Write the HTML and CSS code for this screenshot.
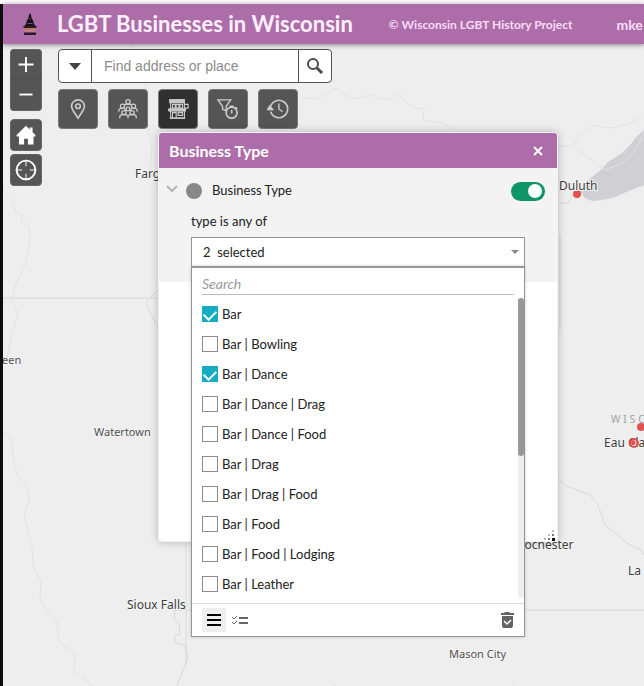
FILE: index.html
```html
<!DOCTYPE html>
<html lang="en">
<head>
<meta charset="utf-8">
<meta name="viewport" content="width=device-width, initial-scale=1">
<title>LGBT Businesses in Wisconsin</title>
<link rel="stylesheet" href="styles.css">
</head>
<body>
<div class="app">
  <header class="header">
    <svg class="logo" viewBox="0 0 14 24" aria-hidden="true">
      <path d="M7 1l1 2 .6 3 1.400 2.500 1 3.500 1.500 2H1.500L3 12l1-3.500L5.400 6 6 3z" fill="#171017"/>
      <path d="M6.200 7h1.600M4.500 11.500h5" stroke="#765077"/>
      <path d="M0 14h14l-1 2H1z" fill="#2c1b22"/>
      <path d="M1 16h12v1.500H1z" fill="#b8795e"/>
      <path d="M1 18h12l-2 1.500H3z" fill="#d18a72"/>
      <path d="M1 20.500h12v2.500H1z" fill="#2c1b2c"/>
    </svg>
    <h1 class="title">LGBT Businesses in Wisconsin</h1>
    <a class="credit" href="#">© Wisconsin LGBT History Project</a>
    <a class="account" href="#">mke</a>
  </header>

  <main class="map">
    <svg class="basemap" aria-hidden="true">
      <path class="water" d="M641 86l-8 7-5 7-9 9-14 9-7 8-13 10-11 12 5 2 3 4 7 3 11-1 12-3 14-6 15-6z"/>
      <g class="border">
        <path d="M0 254H190M183 490v130M183 566h8M522 566H641M557 192v94M557 159h8l5-9"/>
        <path d="M183 566l-11 0-1 8 5 6 1 11-5 0 0 6 4 3 6 1 3 12-5 14-4 9-3 10"/>
        <path d="M155 246l-12 12 4 10 10 19M555 435l8 7 14 5 10 4 8 10 7 20 12 10 10 8 14 7 6 10"/>
      </g>
      <g class="river">
        <path d="M129 0l2 15 12 25 2 45 4 20-2 20 6 13 4 12M0 147l9 10 4 11 6 4-1 6 8 4 1 12-4 24-10 22-4 16 6 14-6 20-6 30M0 388l8 6 3 24 3 12 10 12 2 14-5 16 4 14 4 18 1 18 8 16-1 16 6 12 11 12 2 20 16 12-1 16 18 16 9 14 2 14"/>
        <path d="M300 53l12 2 12-5 8-6 8 5 8 6 12-2 9-3 6 4 12 2 8-8 8 10 10 7 8-1-1 13 8 0 12 2 12 6M555 103l15-2 8-11 12-8 20 2 18-5 10-7M570 102l22 17 10 7 18-7 12-12 12-24"/>
        <path d="M510 640l10 17 13 13 7 14v10M332 640v10l8 8"/>
      </g>
      <g class="point"><circle cx="574" cy="150" r="4"/><circle cx="638" cy="383" r="4"/><circle cx="631" cy="399" r="5"/></g>
      <g class="place">
        <text x="132" y="134">Fargo</text>
        <text x="556" y="146">Duluth</text>
        <text x="601" y="403">Eau Cla</text>
        <text x="514" y="505">Rochester</text>
        <text x="625" y="531">La</text>
        <text x="124" y="565">Sioux Falls</text>
      </g>
      <g class="place town">
        <text x="-1" y="320">een</text>
        <text x="91" y="392">Watertown</text>
        <text x="446" y="614">Mason City</text>
      </g>
      <text class="state" x="608" y="379">WISC</text>
      <circle class="ring" cx="631" cy="399" r="4"/>
    </svg>

    <div class="overlay">
      <nav class="controls" aria-label="Map navigation">
        <div class="zoom">
          <button class="control" aria-label="Zoom in"><svg viewBox="0 0 32 31"><path d="M8 15h16M16 7v16"/></svg></button>
          <button class="control" aria-label="Zoom out"><svg viewBox="0 0 32 31"><path d="M9 15h14"/></svg></button>
        </div>
        <button class="control home" aria-label="Home"><svg viewBox="0 0 32 32"><path class="solid" d="M16 6L6 16v1.500h2.500V26H14v-6h4v6h6v-8.500h2V16l-3-3V8h-3v2z"/></svg></button>
        <button class="control" aria-label="My location"><svg viewBox="0 0 32 32"><circle cx="16" cy="16" r="10"/><path class="thin" d="M16 5v7M16 20v7M5 16h7M20 16h7"/></svg></button>
      </nav>

      <div class="workspace">
        <form class="search" role="search">
          <button type="button" class="search-menu" aria-label="Search sources"><svg viewBox="0 0 12 7"><path d="M0 0h12L6 7z"/></svg></button>
          <input class="search-input" type="text" placeholder="Find address or place" aria-label="Find address or place">
          <button type="button" class="search-go" aria-label="Search"><svg viewBox="0 0 18 18"><circle cx="7" cy="7" r="5"/><path d="M10.500 10.500L16 16" stroke-width="3"/></svg></button>
        </form>

        <div class="widgets">
          <button class="widget" aria-label="Locations"><svg viewBox="0 0 24 24"><path d="M12 22C9 17 5 13 5 9a7 7 0 0 1 14 0c0 4-4 8-7 13z" stroke-width="1.800"/><circle cx="12" cy="9" r="2.500" stroke-width="1.800"/></svg></button>
          <button class="widget" aria-label="Community"><svg viewBox="0 0 24 24"><g stroke-width="1.400"><circle cx="12" cy="4" r="2.300"/><circle cx="6" cy="9" r="2.300"/><circle cx="18" cy="9" r="2.300"/><circle cx="7.500" cy="16" r="2.300"/><circle cx="16.500" cy="16" r="2.300"/><circle cx="12" cy="12" r="2"/><path d="M8.500 8V7h7v1M2 15v-2l2-2h4l2 3M22 15v-2l-2-2h-4l-2 3M3 22v-2l2-2h5l2 2 2-2h5l2 2v2M12 20v2"/></g></svg></button>
          <button class="widget active" aria-label="Business type"><svg viewBox="0 0 24 24"><path d="M3 2h16v3H3zM4 5v7M19 5v7M2 12h18v2H2zM4 14v8h15v-8M19 7h4v4h-4" stroke-width="1.200"/><path class="fill" d="M3 2h16v2H3zM2 12h18v2H2z"/><path d="M6 7h3v4H6zM10 7h3v4h-3zM14 7h3v4h-3zM6 16h4v6H6zM12 16h5v3h-5zM3 22h17" stroke-width="1.200"/></svg></button>
          <button class="widget" aria-label="Time filter"><svg viewBox="0 0 24 24"><path d="M1 2h14L10 9v5l-4-2V9z" stroke-width="1.500"/><circle cx="16" cy="16" r="6" stroke-width="1.800"/><path d="M16 17v-4M14 9h4M20 10l2 2" stroke-width="1.800"/></svg></button>
          <button class="widget" aria-label="Timeline"><svg viewBox="0 0 24 24"><path d="M4 15a9.500 9.500 0 1 0 0-6" stroke-width="1.800"/><path d="M13 6v6l4 3" stroke-width="1.500"/><path class="fill" d="M0 13l3-5 4 5z"/></svg></button>
        </div>
      </div>
    </div>

    <section class="panel" aria-labelledby="panel-title">
      <div class="panel-head">
        <h2 class="panel-title" id="panel-title">Business Type</h2>
        <button class="close" aria-label="Close"><svg viewBox="0 0 10 10"><path d="M1 1l8 8M9 1L1 9"/></svg></button>
      </div>
      <div class="filter">
        <div class="filter-row">
          <button class="collapse" aria-label="Collapse filter"><svg viewBox="0 0 12 8"><path d="M1 1l5 5 5-5"/></svg></button>
          <span class="dot"></span>
          <label class="filter-name" for="enabled">Business Type</label>
          <input class="toggle" type="checkbox" id="enabled" checked>
        </div>
        <div class="field">
          <label class="field-label" for="types">type is any of</label>
          <div class="picker">
            <select class="picker-box" id="types"><option>2 &nbsp;selected</option></select>
            <svg class="picker-arrow" viewBox="0 0 8 4" aria-hidden="true"><path d="M0 0h8L4 4z"/></svg>
            <div class="popup">
              <input class="popup-search" type="text" placeholder="Search" aria-label="Search types">
              <div class="choices">
                <div class="choice-list">
                  <label class="choice"><input type="checkbox" checked>Bar</label>
                  <label class="choice"><input type="checkbox">Bar | Bowling</label>
                  <label class="choice"><input type="checkbox" checked>Bar | Dance</label>
                  <label class="choice"><input type="checkbox">Bar | Dance | Drag</label>
                  <label class="choice"><input type="checkbox">Bar | Dance | Food</label>
                  <label class="choice"><input type="checkbox">Bar | Drag</label>
                  <label class="choice"><input type="checkbox">Bar | Drag | Food</label>
                  <label class="choice"><input type="checkbox">Bar | Food</label>
                  <label class="choice"><input type="checkbox">Bar | Food | Lodging</label>
                  <label class="choice"><input type="checkbox">Bar | Leather</label>
                </div>
                <div class="scroll"><div class="scroll-thumb"></div></div>
              </div>
              <div class="popup-foot">
                <button class="foot-button current" aria-label="Show all"><svg viewBox="0 0 24 24"><path d="M5 7h14M5 12h14M5 17h14" stroke="#000" stroke-width="2"/></svg></button>
                <button class="foot-button" aria-label="Show selected"><svg viewBox="0 0 24 24"><path d="M11 10h9M11 15h9" stroke="#666" stroke-width="2"/><path d="M4 9l2 2 3-3M4 14l2 2 3-3" fill="none" stroke="#666"/></svg></button>
                <button class="foot-button clear" aria-label="Clear selection"><svg viewBox="0 0 24 24"><path d="M6 5h3l1-1h4l1 1h4v2H6zM7 8h11v10l-1 2H8l-1-2z" fill="#636363"/><path d="M9 13l3 3 4-4" fill="none" stroke="#fff" stroke-width="1.500"/></svg></button>
              </div>
            </div>
          </div>
        </div>
      </div>
      <svg class="grip" viewBox="0 0 12 12" aria-hidden="true"><path d="M9 9h3v3H9z" fill="#111"/><path d="M5 9h2v2H5zM9 5h2v2H9z" fill="#777"/><path d="M1 9h2v2H1zM5 5h2v2H5zM9 1h2v2H9z" fill="#bbb"/></svg>
    </section>
  </main>
</div>
</body>
</html>
```
FILE: styles.css
```css
* { box-sizing: border-box; }

body {
  margin: 0;
  background: #0d0b0e;
  color: #222;
  font-family: Lato, "Liberation Sans", sans-serif;
  font-size: 13px;
}

button {
  padding: 0;
  border: 0;
  background: none;
  font: inherit;
  cursor: pointer;
}

svg { display: block; }

.app {
  display: flex;
  flex-direction: column;
  min-height: 100vh;
  border-top: 4px solid #fdf9fd;
  padding-left: 3px;
}

.header {
  position: relative;
  z-index: 1;
  display: flex;
  align-items: center;
  height: 40px;
  padding-left: 20px;
  overflow: hidden;
  background: #ac6da8;
  white-space: nowrap;
  box-shadow: 0 1px 5px rgba(0, 0, 0, .45);
}

.header a { text-decoration: none; }
.logo { flex: none; width: 14px; height: 24px; }

.title {
  margin: 0 0 0 20px;
  color: #fff0ff;
  font-size: 22px;
  line-height: 28px;
}

.credit {
  margin-left: 36px;
  color: #fbdcfa;
  font-size: 12px;
  font-weight: 700;
}

.account {
  margin-left: 44px;
  color: #fbdcfa;
  font-size: 14px;
  font-weight: 700;
}

.map {
  position: relative;
  flex: 1;
  min-height: 642px;
  overflow: hidden;
  background: #eee;
}

.basemap {
  position: absolute;
  inset: 0;
  width: 100%;
  height: 100%;
}

.water { fill: #d0cfd4; }
.border { fill: none; stroke: #d8d8d8; }
.river { fill: none; stroke: #e1e2e4; }
.point { fill: #e2504f; }
.ring { fill: none; stroke: #e2504f; stroke-width: 2; }

.place {
  fill: #3d3d3d;
  stroke: #f4f4f4;
  stroke-width: 2px;
  paint-order: stroke;
  font: 12px "Noto Sans", sans-serif;
}

.town { fill: #505050; font-size: 11px; }
.state { fill: #a0a0a0; font: 10px "Noto Sans", sans-serif; letter-spacing: 3px; }

.overlay {
  position: relative;
  display: flex;
  gap: 16px;
  padding: 5px 7px;
}

.controls { width: 32px; }

.control {
  display: block;
  width: 32px;
  height: 32px;
  border: 1px solid #666;
  border-radius: 4px;
  background: #555;
}

.control svg {
  width: 30px;
  height: 30px;
  fill: none;
  stroke: #fff;
  stroke-width: 2;
}

.control .solid { fill: #fff; stroke: none; }
.control .thin { stroke-width: 1; }
.zoom { margin-bottom: 8px; }
.zoom .control { height: 31px; }
.zoom .control:first-child { border-radius: 4px 4px 0 0; border-bottom-color: #505050; }
.zoom .control:last-child { border-radius: 0 0 4px 4px; border-top: 0; }
.home { margin-bottom: 3px; }

.search {
  display: flex;
  width: 274px;
  height: 34px;
  overflow: hidden;
  border: 1px solid #555;
  border-radius: 4px;
  background: #fff;
}

.search-menu,
.search-go {
  display: flex;
  flex: none;
  align-items: center;
  justify-content: center;
  width: 33px;
}

.search-menu { border-right: 1px solid #555; }
.search-menu svg { width: 12px; height: 7px; fill: #444; }
.search-go { border-left: 1px solid #555; }
.search-go svg { width: 18px; height: 18px; fill: none; stroke: #4c4c4c; stroke-width: 2; }

.search-input {
  flex: 1;
  min-width: 0;
  padding: 0 12px;
  border: 0;
  background: none;
  font: 14px "Liberation Sans", sans-serif;
}

.search-input::placeholder { color: #8c8c8c; }

.widgets { display: flex; gap: 10px; margin-top: 6px; }

.widget {
  display: flex;
  align-items: center;
  justify-content: center;
  width: 40px;
  height: 40px;
  border: 1px solid #777;
  border-radius: 4px;
  background: #555;
}

.widget.active { background: #303030; }
.widget svg { width: 22px; height: 22px; fill: none; stroke: #ccc; }
.widget .fill { fill: #ccc; }

.panel {
  position: absolute;
  top: 88px;
  left: 155px;
  display: flex;
  flex-direction: column;
  width: 400px;
  height: 410px;
  border: 1px solid #f8f2f8;
  border-radius: 4px;
  background: #fff;
  box-shadow: 0 0 8px rgba(0, 0, 0, .25);
}

.panel-head {
  display: flex;
  align-items: center;
  justify-content: space-between;
  height: 35px;
  padding: 0 14px 0 10px;
  border-radius: 3px 3px 0 0;
  background: #ac6da8;
}

.panel-title {
  margin: 0;
  color: #fff;
  font-size: 16px;
}

.close svg {
  width: 10px;
  height: 10px;
  fill: none;
  stroke: #fff;
  stroke-width: 2;
}

.filter {
  height: 114px;
  padding: 11px 12px 0 7px;
  background: #f3f3f3;
}

.filter-row { display: flex; align-items: center; height: 24px; }
.collapse { padding-bottom: 4px; }
.collapse svg { width: 12px; height: 8px; fill: none; stroke: #b5b5b5; stroke-width: 2; }
.dot { width: 16px; height: 16px; margin-left: 8px; border-radius: 50%; background: #888; }
.filter-name { margin-left: 10px; padding-bottom: 2px; }

.toggle {
  display: flex;
  align-items: center;
  justify-content: flex-end;
  width: 34px;
  height: 19px;
  margin: 0 0 0 auto;
  padding: 0 3px;
  appearance: none;
  border-radius: 10px;
  background: #0d9467;
}

.toggle::before {
  width: 14px;
  height: 14px;
  border-radius: 50%;
  background: #fff;
  content: "";
}

.toggle:not(:checked) { justify-content: flex-start; background: #999; }

.field { padding: 10px 20px 0 25px; }
.field-label { display: block; line-height: 16px; }
.picker { position: relative; margin-top: 8px; }

.picker-box {
  display: block;
  width: 100%;
  height: 30px;
  padding: 0 11px;
  appearance: none;
  border: 1px solid #959595;
  border-radius: 0;
  background: #fff;
  color: #222;
  font: inherit;
}

.picker-arrow {
  position: absolute;
  top: 13px;
  right: 6px;
  width: 8px;
  height: 4px;
  fill: #888;
}

.popup {
  position: absolute;
  top: 29px;
  right: 0;
  left: 0;
  border: 1px solid #959595;
  border-top-width: 2px;
  background: #fff;
  box-shadow: 0 0 3px rgba(0, 0, 0, .2);
}

.popup-search {
  display: block;
  width: calc(100% - 20px);
  height: 27px;
  margin: 0 10px;
  padding: 5px 0 0;
  border: 0;
  border-bottom: 1px solid #bbb;
  background: none;
  font: inherit;
  font-size: 14px;
}

.popup-search::placeholder { color: #999; font-style: italic; }

.choices { display: flex; padding-top: 3px; }
.choice-list { flex: 1; padding: 1px 10px 4px; }

.choice {
  display: flex;
  align-items: center;
  gap: 4px;
  height: 30px;
}

.choice input {
  display: flex;
  justify-content: center;
  width: 16px;
  height: 16px;
  margin: 0;
  padding-top: 3px;
  appearance: none;
  border: 1px solid #8b8b8b;
  background: #fff;
}

.choice input:checked { border-color: #14acc0; background: #14acc0; }

.choice input:checked::before {
  width: 10px;
  height: 6px;
  border: solid #fff;
  border-width: 0 0 2px 2px;
  transform: rotate(-45deg);
  content: "";
}

.scroll { width: 6px; margin-bottom: 5px; border-radius: 3px; background: #eee; }
.scroll-thumb { height: 158px; border-radius: 3px; background: #989898; }

.popup-foot {
  display: flex;
  align-items: center;
  gap: 2px;
  height: 33px;
  padding: 0 5px 0 10px;
  border-top: 1px solid #ddd;
}

.foot-button { width: 24px; height: 24px; }
.foot-button.current { background: #eee; }
.foot-button.clear { margin-left: auto; }
.foot-button svg { width: 24px; height: 24px; }

.grip {
  width: 12px;
  height: 12px;
  margin: auto 2px 0 auto;
}
```
